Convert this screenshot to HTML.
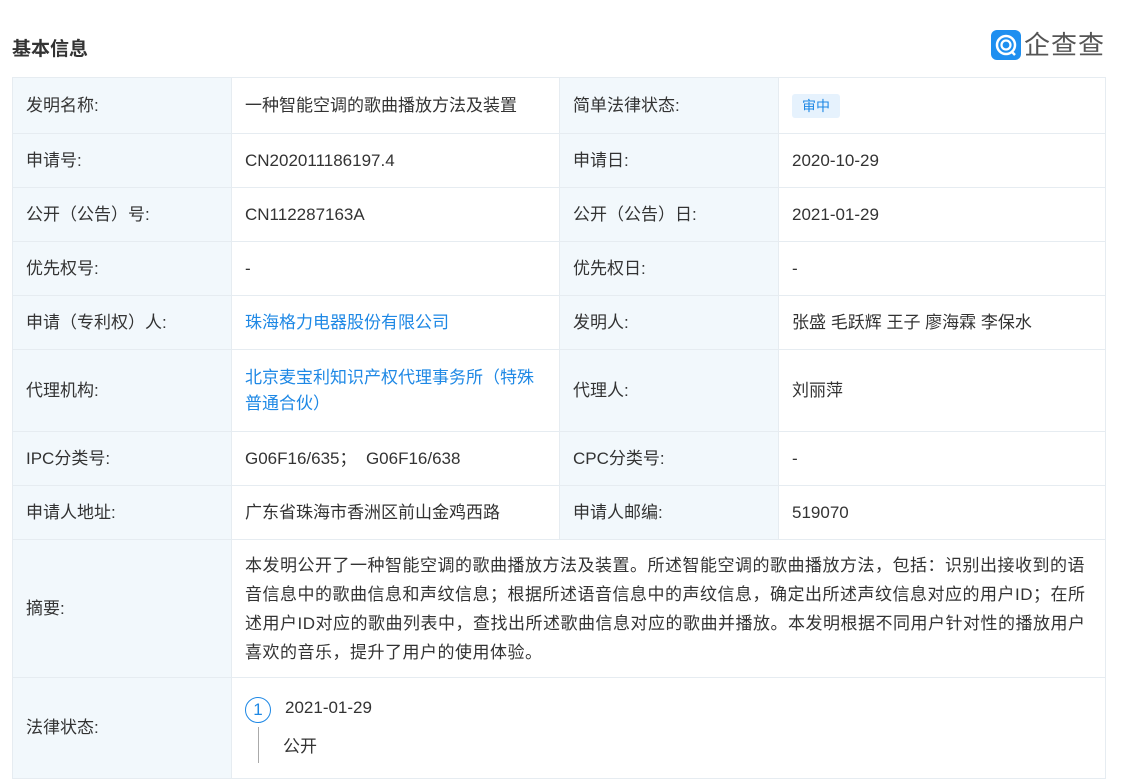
<!DOCTYPE html>
<html><head><meta charset="utf-8"><style>
body{margin:0;background:#fff;font-family:"Liberation Sans","Noto Sans CJK SC",sans-serif;color:#333;width:1129px;height:783px;overflow:hidden;position:relative}
h1{position:absolute;left:12px;top:34px;margin:0;font-size:19px;font-weight:bold;color:#333}
.logo{position:absolute;left:991px;top:30px;display:flex;align-items:center}
.logo .ic{width:30px;height:30px;border-radius:6px;background:#1e8ff0;position:relative}
.logo span{font-size:26px;color:#555;margin-left:3px;letter-spacing:1px;line-height:30px}
table{position:absolute;left:12px;top:77px;border-collapse:collapse;width:1094px;font-size:17px}
td{border:1px solid #e6ecf1;padding:0 0 0 13px;vertical-align:middle;line-height:26px}
td.l{background:#f2f8fc;width:205px}
td.v{width:314px}
a{color:#1e88e5;text-decoration:none}
.tag{display:inline-block;background:#e6f2fd;color:#1e88e5;font-size:14px;padding:0 10px;line-height:24px;border-radius:3px}
</style></head><body>
<h1>基本信息</h1>
<div class="logo"><div class="ic"><svg width="30" height="30" viewBox="0 0 30 30"><circle cx="15" cy="15" r="9" fill="none" stroke="#fff" stroke-width="2.5"/><circle cx="15" cy="15" r="4.5" fill="none" stroke="#fff" stroke-width="2.2"/><path d="M20 21l4 4" stroke="#fff" stroke-width="2.5"/></svg></div><span>企查查</span></div>
<table>
<tr style="height:56px"><td class="l">发明名称:</td><td class="v">一种智能空调的歌曲播放方法及装置</td><td class="l">简单法律状态:</td><td><span class="tag">审中</span></td></tr>
<tr style="height:54px"><td class="l">申请号:</td><td class="v">CN202011186197.4</td><td class="l">申请日:</td><td>2020-10-29</td></tr>
<tr style="height:54px"><td class="l">公开（公告）号:</td><td class="v">CN112287163A</td><td class="l">公开（公告）日:</td><td>2021-01-29</td></tr>
<tr style="height:54px"><td class="l">优先权号:</td><td class="v">-</td><td class="l">优先权日:</td><td>-</td></tr>
<tr style="height:54px"><td class="l">申请（专利权）人:</td><td class="v"><a>珠海格力电器股份有限公司</a></td><td class="l">发明人:</td><td>张盛 毛跃辉 王子 廖海霖 李保水</td></tr>
<tr style="height:82px"><td class="l">代理机构:</td><td class="v"><a>北京麦宝利知识产权代理事务所（特殊<br>普通合伙）</a></td><td class="l">代理人:</td><td>刘丽萍</td></tr>
<tr style="height:54px"><td class="l">IPC分类号:</td><td class="v">G06F16/635；&nbsp; G06F16/638</td><td class="l">CPC分类号:</td><td>-</td></tr>
<tr style="height:54px"><td class="l">申请人地址:</td><td class="v">广东省珠海市香洲区前山金鸡西路</td><td class="l">申请人邮编:</td><td>519070</td></tr>
<tr style="height:138px"><td class="l">摘要:</td><td colspan="3" style="padding-right:10px;line-height:29px;letter-spacing:0.5px">本发明公开了一种智能空调的歌曲播放方法及装置。所述智能空调的歌曲播放方法，包括：识别出接收到的语<br>音信息中的歌曲信息和声纹信息；根据所述语音信息中的声纹信息，确定出所述声纹信息对应的用户ID；在所<br>述用户ID对应的歌曲列表中，查找出所述歌曲信息对应的歌曲并播放。本发明根据不同用户针对性的播放用户<br>喜欢的音乐，提升了用户的使用体验。</td></tr>
<tr style="height:101px"><td class="l">法律状态:</td><td colspan="3" style="position:relative">
<div style="position:relative;height:90px">
<div style="position:absolute;left:0;top:14px;width:24px;height:24px;border:1px solid #1e88e5;border-radius:50%;color:#1e88e5;text-align:center;line-height:24px;font-size:17px">1</div>
<div style="position:absolute;left:40px;top:12px">2021-01-29</div>
<div style="position:absolute;left:13px;top:44px;width:1px;height:36px;background:#aaa"></div>
<div style="position:absolute;left:38px;top:51px">公开</div>
</div></td></tr>
</table>
</body></html>
